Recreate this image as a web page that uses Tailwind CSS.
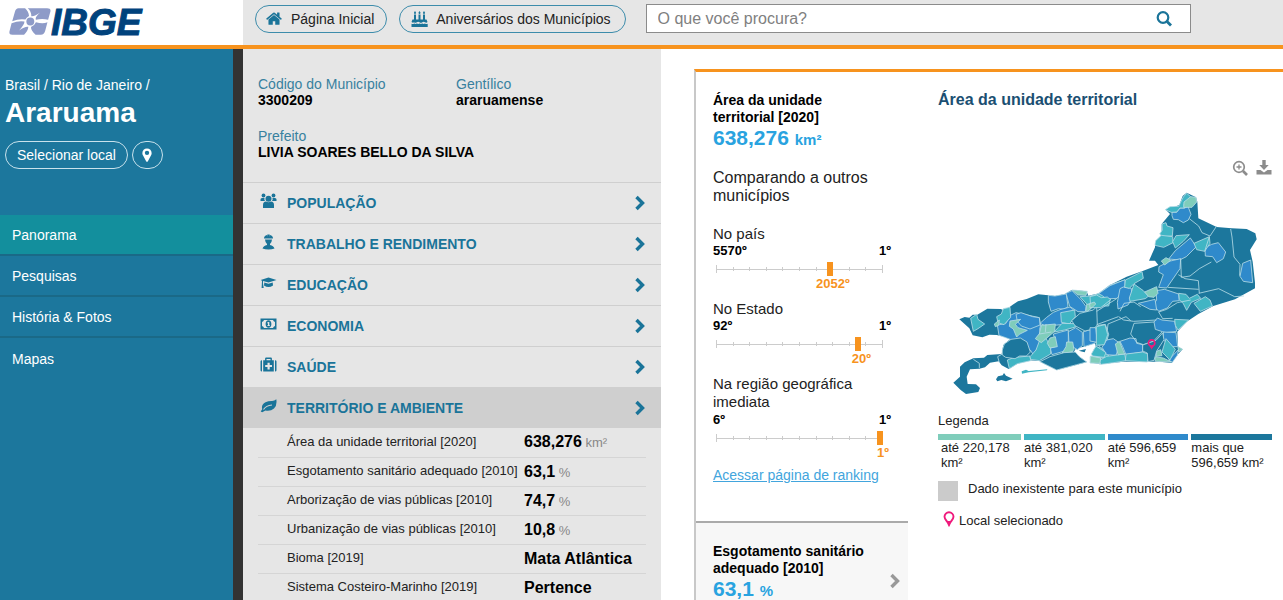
<!DOCTYPE html>
<html lang="pt-BR">
<head>
<meta charset="utf-8">
<meta name="viewport" content="width=device-width, initial-scale=1">
<title>IBGE | Araruama | Panorama</title>
<script src="https://cdn.jsdelivr.net/npm/@tailwindcss/browser@4"></script>
</head>
<body class="flex h-screen flex-col overflow-hidden bg-white font-['Liberation_Sans',Arial,sans-serif] text-sm text-[#222]">

<svg class="hidden" aria-hidden="true">
  <symbol id="chevron" viewBox="0 0 10 16"><path d="M1.5 2 7.5 8l-6 6" fill="none" stroke="currentColor" stroke-width="3.4"/></symbol>
  <symbol id="pin" viewBox="0 0 12 16"><path fill-rule="evenodd" fill="currentColor" d="M6 .5C2.900.5.700 2.800.700 5.700c0 1.300.300 2 .800 3l3.500 6.300c.400.800 1.600.800 2 0L10.500 8.700c.500-1 .800-1.700.800-3C11.300 2.800 9.100.5 6 .5zM6 3a2.500 2.500 0 1 1 0 5 2.500 2.500 0 0 1 0-5z"/></symbol>
  <symbol id="outline-pin" viewBox="0 0 12 16"><path fill="none" stroke="currentColor" stroke-width="1.900" d="M6 1.300a4.500 4.500 0 0 0-4.500 4.500c0 2 2 3.700 3.300 5.700L6 14l1.200-2.500c1.300-2 3.300-3.700 3.300-5.700A4.500 4.500 0 0 0 6 1.300z"/><path fill="currentColor" d="M3.800 10h4.400L6 15z"/></symbol>
</svg>

<header class="flex h-[49px] shrink-0 border-b-4 border-[#f7931e] bg-[#e6e6e6]">
  <a href="#" aria-label="IBGE" class="flex w-[243px] shrink-0 items-start bg-white pl-[9px]">
    <svg class="mt-2 h-[27px] w-[42px] shrink-0" viewBox="0 0 126 82" fill="#8e9bc8">
      <path d="M28 1H48Q59 11 60 24 53 27 49 35 30 32 9 40L17 12Q20 1 28 1z"/>
      <path d="M56 1H115Q127 1 125 11L118 36Q100 31 81 36 77 28 94 14 78 26 67 25 67 10 56 1z"/>
      <path d="M7 46Q28 38 46 41 47 50 30 68 48 55 58 57 57 70 45 81H9Q-2 81 1 70z"/>
      <path d="M81 43Q102 49 116 43L109 70Q106 81 96 81H80Q66 70 66 58 76 54 81 43z"/>
      <circle cx="64" cy="41" r="12"/>
    </svg>
    <svg class="h-11 w-[120px]" viewBox="0 0 120 44" role="img" aria-label="IBGE">
      <text x="0" y="35" fill="#00427c" stroke="#00427c" stroke-width="1" font-family="Liberation Sans, Arial, sans-serif" font-size="37" font-weight="bold" font-style="italic">IBGE</text>
    </svg>
  </a>
  <div class="flex min-w-0 flex-1 items-start pt-1 pl-3">
    <nav class="flex gap-3 pt-px whitespace-nowrap">
      <a href="#" class="flex h-7 items-center rounded-full border border-[#3d8cab] pr-3 pl-[10px]">
        <svg class="mr-[9px] h-4 w-4 text-[#1a7499]" viewBox="64 192 1664 1472" fill="currentColor"><path d="M1472 992v480q0 26-19 45t-45 19h-384v-384h-256v384h-384q-26 0-45-19t-19-45v-480q0-1 .5-3t.5-3l575-474 575 474q1 2 1 6zm223-69l-62 74q-8 9-21 11h-3q-13 0-21-7l-692-577-692 577q-12 8-24 7-13-2-21-11l-62-74q-8-10-7-23.500t11-21.500l719-599q32-26 76-26t76 26l244 204v-195q0-14 9-23t23-9h192q14 0 23 9t9 23v408l219 182q10 8 11 21.500t-7 23.500z"/></svg>
        Página Inicial
      </a>
      <a href="#" class="flex h-7 items-center rounded-full border border-[#3d8cab] pr-[14px] pl-[11px]">
        <svg class="mr-2 h-[17px] w-[17px] text-[#1a7499]" viewBox="0 0 17 17" fill="currentColor"><path d="M3 3.500h2V9H3zM7.500 3.500h2V9h-2zM12 3.500h2V9h-2zM4 0l1 1.500Q5 3 4 3T3 1.500zM8.500 0l1 1.500q0 1.500-1 1.500t-1-1.500zM13 0l1 1.500Q14 3 13 3t-1-1.500zM1.500 8.500h14l1 2.500q-1 1.300-2.500.3-1.300-1-2.700 0-1.500 1-2.800 0-1.300-1-2.700 0-1.500 1-2.800 0Q2 12.300.5 11zM.5 12.800q1.300.7 2.700-.2 1.300.9 2.700 0 1.300.9 2.700 0 1.300.9 2.700 0 1.300.9 2.700 0 1.300.9 2.700.2V16H.5z"/></svg>
        Aniversários dos Municípios
      </a>
    </nav>
    <form class="mr-[92px] ml-5 flex h-[29px] min-w-0 flex-1 items-center border border-[#8b8b8b] bg-white pr-4">
      <input type="search" aria-label="O que você procura?" placeholder="O que você procura?" class="h-full min-w-0 flex-1 px-[11px] text-base outline-none placeholder:text-[#808080]">
      <button type="button" aria-label="Buscar" class="text-[#1a7499]"><svg class="h-5 w-5" viewBox="0 0 20 20" fill="none" stroke="currentColor" stroke-width="2.200"><circle cx="9" cy="8.500" r="5.300"/><path d="m13 12.500 4 4" stroke-width="2.800"/></svg></button>
    </form>
  </div>
</header>

<div class="flex min-h-0 flex-1">
  <aside class="w-[243px] shrink-0 border-r-10 border-[#333] bg-[#1c779d] text-white">
    <div class="h-[166px] px-[5px] pt-7">
      <p class="leading-4">Brasil / Rio de Janeiro /</p>
      <h1 class="pt-1 text-[28px] leading-8 font-bold">Araruama</h1>
      <div class="flex gap-1 pt-3">
        <button type="button" class="h-7 rounded-full border border-[#c8e2ec] px-[11px] whitespace-nowrap">Selecionar local</button>
        <button type="button" aria-label="Ver no mapa" class="flex h-7 w-[31px] items-center justify-center rounded-full border border-[#c8e2ec]"><svg class="h-[14px] w-3"><use href="#pin"/></svg></button>
      </div>
    </div>
    <nav class="[&>a]:flex [&>a]:h-[41px] [&>a]:items-center [&>a]:pl-3">
      <a href="#" class="border-b-2 border-[#1a6987] bg-[#138f9d]">Panorama</a>
      <a href="#" class="border-b-2 border-[#1a6987]">Pesquisas</a>
      <a href="#" class="border-b-2 border-[#1a6987]">História &amp; Fotos</a>
      <a href="#">Mapas</a>
    </nav>
  </aside>

  <section class="w-[418px] shrink-0 overflow-hidden bg-[#e6e6e6]">
    <dl class="mx-[15px] grid h-[133px] grid-cols-[198px_1fr] content-start gap-y-5 pt-[27px] leading-4 [&_dd]:font-bold [&_dd]:text-black [&_dt]:text-[#38819f]">
      <div><dt>Código do Município</dt><dd>3300209</dd></div>
      <div><dt>Gentílico</dt><dd>araruamense</dd></div>
      <div class="col-span-2"><dt>Prefeito</dt><dd>LIVIA SOARES BELLO DA SILVA</dd></div>
    </dl>
    <div class="font-bold text-[#1a7499] [&>button]:flex [&>button]:h-[41px] [&>button]:w-full [&>button]:items-center [&>button]:border-t [&>button]:border-[#cfcfcf] [&>button]:pr-4 [&>button]:pl-[17px]">
      <button type="button"><svg class="mr-[10px] mb-1 h-4 w-[17px]" viewBox="0 0 17 16" fill="currentColor"><circle cx="3.500" cy="2.500" r="1.900"/><circle cx="13.500" cy="2.500" r="1.900"/><circle cx="8.500" cy="5.700" r="3"/><path d="M.5 8V6.500Q.5 5 2 5h2.500q-.5 2 .5 3zM16.500 8V6.500Q16.500 5 15 5h-2.500q.5 2-.5 3zM3 15v-3q0-3.500 3-3.500 2.500 1.500 5 0 3 0 3 3.500v3z"/></svg><span class="flex-1 text-left">POPULAÇÃO</span><svg class="h-4 w-[10px]"><use href="#chevron"/></svg></button>
      <button type="button"><svg class="mr-[10px] mb-1 h-4 w-[17px]" viewBox="0 0 17 16" fill="currentColor"><path d="M4 4.500Q4 1.500 7 .9l.3 2V.4h2.400v2.500l.3-2q3 .6 3 3.600zM5 5.500h7q-.3 3.500-2 4.500v1q3.500.5 4.500 3.500-2.500 1-6 1t-6-1Q3.500 11.500 7 11v-1q-1.700-1-2-4.500z"/></svg><span class="flex-1 text-left">TRABALHO E RENDIMENTO</span><svg class="h-4 w-[10px]"><use href="#chevron"/></svg></button>
      <button type="button"><svg class="mr-[10px] mb-1 h-4 w-[17px]" viewBox="0 0 17 16" fill="currentColor"><path d="m8.500 2.500 8 2.500-8 2.600L3 6v2.500l.7 4.500H1.600L2 5.700.7 5zM4.300 7.500l4.200 1.300 4.200-1.300.3 3q-4.500 3-9 0z"/></svg><span class="flex-1 text-left">EDUCAÇÃO</span><svg class="h-4 w-[10px]"><use href="#chevron"/></svg></button>
      <button type="button"><svg class="mr-[10px] mb-1 h-4 w-[17px]" viewBox="0 0 17 16" fill="currentColor"><path fill-rule="evenodd" d="M.5 2.500h16v11H.5zM4 4Q3.500 5.500 2 6v4q1.500.5 2 2h9q.5-1.500 2-2V6q-1.500-.5-2-2z"/><path fill-rule="evenodd" d="M8.500 4.200c1.800 0 2.900 1.600 2.900 3.800s-1.100 3.800-2.900 3.800S5.600 10.200 5.600 8s1.100-3.800 2.900-3.800zM7 6.800l.5.800.5-.3v2h-.7v.8h2.700v-.8h-.7V5.900h-1z"/></svg><span class="flex-1 text-left">ECONOMIA</span><svg class="h-4 w-[10px]"><use href="#chevron"/></svg></button>
      <button type="button"><svg class="mr-[10px] mb-1 h-4 w-[17px]" viewBox="0 0 17 16" fill="currentColor"><path fill-rule="evenodd" d="M.5 4.500q0-1.200 1.500-1.200v11.200Q.5 14.500.5 13.300zM16.500 4.500q0-1.200-1.500-1.200v11.200q1.500 0 1.500-1.200zM3.200 3.300h1.900V1.500q0-1 1-1h4.800q1 0 1 1v1.800h1.900v11.200H3.200zM6.500 2v1.300h4V2zM7.500 5.700v2.200H5.200v2.200h2.300v2.300h2.200v-2.300H12V7.900H9.700V5.700z"/></svg><span class="flex-1 text-left">SAÚDE</span><svg class="h-4 w-[10px]"><use href="#chevron"/></svg></button>
      <button type="button" class="bg-[#cfcfcf]"><svg class="mr-[10px] mb-1 h-4 w-[17px]" viewBox="0 0 17 16"><path fill="currentColor" d="M16.300 1.300q1 6-2.300 9.200-3.500 3-8.500 2L2.200 14.300.7 13.500l1.500-2.300Q1 6.500 5.500 4.300q3-1.300 6.500-1.200 2.500 0 4.300-1.800z"/><path d="M3.500 11.500Q6 7.500 12 7" fill="none" stroke="#cfcfcf" stroke-width="1.200"/></svg><span class="flex-1 text-left">TERRITÓRIO E AMBIENTE</span><svg class="h-4 w-[10px]"><use href="#chevron"/></svg></button>
    </div>
    <div class="mx-[15px]">
      <table class="w-full table-fixed border-collapse text-left text-[13px] whitespace-nowrap [&_b]:text-base [&_b]:text-black [&_span]:text-[#888] [&_th]:w-[266px] [&_th]:pl-[29px] [&_th]:font-normal [&_tr]:h-[29px] [&_tr]:border-b [&_tr]:border-[#d5d5d5]">
        <tbody>
          <tr><th scope="row">Área da unidade territorial [2020]</th><td><b>638,276</b> <span>km²</span></td></tr>
          <tr><th scope="row">Esgotamento sanitário adequado [2010]</th><td><b>63,1</b> <span>%</span></td></tr>
          <tr><th scope="row">Arborização de vias públicas [2010]</th><td><b>74,7</b> <span>%</span></td></tr>
          <tr><th scope="row">Urbanização de vias públicas [2010]</th><td><b>10,8</b> <span>%</span></td></tr>
          <tr><th scope="row">Bioma [2019]</th><td><b>Mata Atlântica</b></td></tr>
          <tr><th scope="row">Sistema Costeiro-Marinho [2019]</th><td><b>Pertence</b></td></tr>
        </tbody>
      </table>
    </div>
  </section>

  <main class="flex min-w-0 flex-1 pt-5 pl-[33px]">
    <div class="flex min-w-0 flex-1 border-t-3 border-l-2 border-t-[#f7931e] border-l-[#c8c8c8]">
      <div class="flex w-[212px] shrink-0 flex-col overflow-hidden">
        <section class="h-[449px] shrink-0 pt-5 pl-[17px]">
          <h2 class="w-40 leading-[17px] font-bold text-black">Área da unidade territorial [2020]</h2>
          <p class="text-[21px] leading-6 font-bold text-[#29a3e0]">638,276 <span class="text-[15px]">km²</span></p>
          <h3 class="pt-[17px] text-base leading-[18px]">Comparando a outros municípios</h3>

          <div class="w-[178px] pt-5">
            <h4 class="text-[15px] leading-[17px]">No país</h4>
            <div class="flex justify-between text-[13px] leading-[18px] font-bold text-black"><span>5570º</span><span>1º</span></div>
            <div class="relative mr-2 ml-[3px] h-10">
              <div class="flex h-[18px] items-center justify-between bg-[linear-gradient(#ccc,#ccc)] bg-[length:100%_1px] bg-center bg-no-repeat [&>i]:h-1 [&>i]:w-px [&>i]:bg-[#ccc]"><i class="h-2!"></i><i></i><i></i><i></i><i></i><i></i><i></i><i></i><i></i><i></i><i class="h-2!"></i></div>
              <div class="absolute top-[2px] w-[6px] -translate-x-1/2" style="left:68%"><div class="h-[14px] bg-[#f7931e]"></div></div>
              <span class="absolute top-4 -translate-x-1/2 text-[13px] leading-4 font-bold text-[#f7931e]" style="left:70%">2052º</span>
            </div>
          </div>
          <div class="w-[178px]">
            <h4 class="text-[15px] leading-[17px]">No Estado</h4>
            <div class="flex justify-between text-[13px] leading-[18px] font-bold text-black"><span>92º</span><span>1º</span></div>
            <div class="relative mr-2 ml-[3px] h-10">
              <div class="flex h-[18px] items-center justify-between bg-[linear-gradient(#ccc,#ccc)] bg-[length:100%_1px] bg-center bg-no-repeat [&>i]:h-1 [&>i]:w-px [&>i]:bg-[#ccc]"><i class="h-2!"></i><i></i><i></i><i></i><i></i><i></i><i></i><i></i><i></i><i></i><i class="h-2!"></i></div>
              <div class="absolute top-[2px] w-[6px] -translate-x-1/2" style="left:85%"><div class="h-[14px] bg-[#f7931e]"></div></div>
              <span class="absolute top-4 -translate-x-1/2 text-[13px] leading-4 font-bold text-[#f7931e]" style="left:87%">20º</span>
            </div>
          </div>
          <div class="w-[178px]">
            <h4 class="text-[15px] leading-[18px]">Na região geográfica imediata</h4>
            <div class="flex justify-between text-[13px] leading-[18px] font-bold text-black"><span>6º</span><span>1º</span></div>
            <div class="relative mr-2 ml-[3px] h-9">
              <div class="flex h-[18px] items-center justify-between bg-[linear-gradient(#ccc,#ccc)] bg-[length:100%_1px] bg-center bg-no-repeat [&>i]:h-1 [&>i]:w-px [&>i]:bg-[#ccc]"><i class="h-2!"></i><i></i><i></i><i></i><i></i><i></i><i></i><i></i><i></i><i></i><i class="h-2!"></i></div>
              <div class="absolute top-[2px] w-[6px] -translate-x-1/2" style="left:98%"><div class="h-[14px] bg-[#f7931e]"></div></div>
              <span class="absolute top-4 -translate-x-1/2 text-[13px] leading-4 font-bold text-[#f7931e]" style="left:100%">1º</span>
            </div>
          </div>
          <a href="#" class="text-sm leading-4 text-[#42a5dd] underline">Acessar página de ranking</a>
        </section>
        <section class="flex flex-1 shrink-0 items-start border-t-2 border-[#aaa] bg-[#f7f7f7] pt-5 pr-2 pl-[17px]">
          <div class="flex-1">
            <h2 class="leading-[17px] font-bold text-black">Esgotamento sanitário adequado [2010]</h2>
            <p class="text-[21px] leading-6 font-bold text-[#29a3e0]">63,1 <span class="text-[15px]">%</span></p>
          </div>
          <svg class="mt-[30px] h-4 w-[10px] shrink-0 text-[#999]"><use href="#chevron"/></svg>
        </section>
      </div>

      <section class="min-w-0 flex-1 pt-[18px] pr-[11px] pl-[30px]">
        <h2 class="text-base leading-5 font-bold text-[#1b4f72]">Área da unidade territorial</h2>
        <div class="flex justify-end gap-2 pt-[50px] text-[#8c8c8c]">
          <button type="button" aria-label="Ampliar"><svg class="h-4 w-4" viewBox="0 0 16 16" fill="none" stroke="currentColor"><circle cx="7" cy="7" r="5.300" stroke-width="1.700"/><path d="m11 11 4 4" stroke-width="2.600"/><path d="M4.500 7h5M7 4.500v5" stroke-width="1.300"/></svg></button>
          <button type="button" aria-label="Baixar"><svg class="h-4 w-4" viewBox="0 0 16 16" fill="currentColor"><path d="M6.300 0h3.400v5h3L8 10 3.300 5h3zM.5 10h4L8 12.500l3.500-2.500h4v4.500H.5z"/></svg></button>
        </div>
        <svg class="mt-3 aspect-[345/219] w-[345px]" viewBox="24 24 1035 657" role="img" aria-label="Mapa dos municípios do Rio de Janeiro" stroke="#b4dbe6" stroke-width="2.500" stroke-linejoin="round">
          <!-- state outline -->
          <path fill="#1c779d" stroke="none" d="M88 418L104 411 118 413 128 404 142 404 172 386 212 387 222 391 240 380 248 374 264 364 290 357 325 343 355 346 375 348 405 342 425 330 470 334 475 347 508 340 540 315 590 290 640 272 685 255 675 242 657 242 675 202 675 190 695 165 695 132 720 102 708 90 748 75 758 48 770 38 798 52 802 65 805 115 860 141 905 145 950 147 976 160 980 178 960 210 968 245 975 308 975 325 915 358 850 378 805 402 770 425 742 455 744 500 758 508 742 525 725 549 690 545 580 545 510 553 480 547 485 528 500 510 495 490 462 500 438 505 432 515 446 528 470 546 440 554 380 570 345 553 328 543 300 541 262 551 236 567 215 556 206 544 180 548 165 562 148 566 120 568 110 590 113 612 138 613 150 624 145 636 108 642 92 630 70 608 90 590 90 560 104 547 130 535 162 533 172 525 215 522 220 495 240 478 222 470 200 465 178 464 157 472 128 466 118 445z"/>
          <g fill="#1c779d" stroke="none"><path d="M198 598l6-9 14-3 4-7 6 8 20 9-20 8-14-4-12 4zM446 512l22-5-4 10z"/></g>
          <path fill="#40b5c4" stroke="none" d="M275 574l13-5 8 4 56-5-1 3-55 6-20 4z"/>
          <g fill="none"><path d="M130 538l18 12 0 14M217 522l-14 8 5 18M234 391l-10 2"/></g>
          <!-- western municipalities -->
          <g fill="#2f8acb">
            <path d="M202 435l25-4 14-25 17-8 20 4 50 11 4 22-3 12 2 20-2 25-10 20-8 14-10-16-26-20-34-12-34-12z"/>
            <path d="M258 403l15-5 35 12 20 3 2 22-30 12-26-9-12-14z"/>
            <path d="M355 346l20 2 34-6 5 38-12 8-17-2-22 8-8-28z"/>
            <path d="M330 430l20-18 20-15 20-8 30-8 12 10-30 10 4 32-35 3-20 4z"/>
            <path d="M408 340l18-8 28 28 14 20-2 15-22 0-25-16z"/>
            <path d="M370 462l45-12 0 40-7 22-42 12-6-20 20-5z"/>
            <path d="M415 455l22-12 20 14 0 40-15 12-25-15z"/>
            <path d="M460 455l42-12 0 34-8 13-32 10z"/>
            <path d="M506 340l34-25 45-15 2 42-44 12-10-5z"/>
          </g>
          <g fill="#40b5c4">
            <path d="M122 415l18-12 4 15 20 14-20 14-14 8z"/>
            <path d="M200 410l14-8 6-16 20-4 2 30-20 22-18-6z"/>
            <path d="M232 540l22-8 46-4 2 14-40 9-24 15z"/>
            <path d="M300 530l18-20 12-32 15-8 17 30 0 22-34 20-26-4z"/>
            <path d="M392 398l42-8 2 20-18 22-24-5z"/>
            <path d="M372 456l24-26 38 1 2 10-32 9z"/>
            <path d="M450 350l30-2 30-8 32 14-6 24-38 0-2-14-24 10z"/>
            <path d="M504 436l22-3 10 30-8 28-22 5-8-20z"/>
            <path d="M492 508l18-8 30 32-30 2-22-6z"/>
          </g>
          <g fill="#7fcdbb">
            <path d="M240 423l32-5-16 15 8 10 28 8-24 12-8 8-10-24-12-8z"/>
            <path d="M334 436l42-4-2 22-26 22-14 12-18-12 16-20z"/>
            <path d="M360 474l16-4 6 30-22 4-8-14z"/>
            <path d="M396 520l12-20 2-14 18 0 4 22-6 8z"/>
            <path d="M426 330l46 4-4 12-24-1z"/>
            <path d="M470 373l26-2-12 14-16 12z"/>
            <path d="M193 432l15-12-2 16-10 4z"/>
            <path d="M480 530l32 4 2 16-32-2z"/>
            <path d="M334 436l-6 26 36-6M348 432l-2 24"/>
          </g>
          <path fill="#1c779d" d="M425 422l25-22 40-10 10-10 2 55-12 12-25 6-30-16z"/>
          <path fill="#1c779d" d="M217 525l0-15 6-18 20-14 28-4 20 12 10 30-12 12-20 0-14 8-28-4z"/>
          <path fill="#1c779d" d="M330 545l30-15 42-12 34-2 12 14 22 16-30 8-60 16z"/>

          <!-- eastern and northern municipalities -->
          <g transform="translate(480 -90)">
            <g fill="#2f8acb">
              <path d="M246 186l14 1 10-13 14 0 10-5 9 24-8 17-15 8-15-9-15-1-4-11z"/>
              <path d="M236 327l20-25 45-38 18 26-30 30-20 10z"/>
              <path d="M207 350l30-16 35-8-2 30-40 58-24-2 14-38-14-8z"/>
              <path d="M345 293l20-10 20-5 22 28-7 20-20 12-12-18-22-2z"/>
              <path d="M458 340l24-10 6 68-28-4-10-15z"/>
              <path d="M26 431l34-24 45-18 0 26-24 30-32 2-12-10z"/>
              <path d="M90 416l10-5 24 4 2 30-12 20-30 12-2-20z"/>
              <path d="M198 422l26-4 42 14 2 20-20 2-16 20-26 10-16-20 10-14z"/>
              <path d="M145 460l50-12 5 32-20-2z"/>
              <path d="M192 516l10-12 14 6 38 4 6 30-34 4-30-10z"/>
              <path d="M220 546l38 2 5 42-15 0-28-20z"/>
              <path d="M36 592l14-22 20-4 20 14-12 36-28-2z"/>
              <path d="M90 574l30-10 18 2 2 14 18 4 0 22-50 8-10-24z"/>
              <path d="M236 630l30-32-4 18-15 21z"/>
              <path d="M0 533l17 0 5 44-22-4z"/>
            </g>
            <g fill="#40b5c4">
              <path d="M226 179l14-9 26-1 14-28 10-11 12 10-20 22 2 12-14 0-10 12-16 1z"/>
              <path d="M216 222l12-4 3 10 18 5-2 25-30 2-8-8 8-12z"/>
              <path d="M197 272l17-16 34 4 1 18-28 14-26-6z"/>
              <path d="M248 275l10-18 40-3-18 20-24 20z"/>
              <path d="M312 280l46-20 2 20-16 24-24-5z"/>
              <path d="M106 390l50-25 4 20-28 16-14 14-14-3z"/>
              <path d="M118 444l14-42 28 20 16 16-10 8-46 8z"/>
              <path d="M266 430l22 3 10 12 24-12 10 12-28 12-14 24-10-20-12-12z"/>
              <path d="M312 460l34-20 14 10 7 18-36 16z"/>
              <path d="M254 508l42 2-32 30-8-14z"/>
              <path d="M19 530l26-6 8 30-10 30-24 2z"/>
              <path d="M216 606l12-40 28 32-16 32z"/>
              <path d="M24 634l26-15 54-7 4 20-30 5-44 6z"/>
              <path d="M108 612l50-6 16 6-2 24-66-4z"/>
              <path d="M4 612l14-24 30 20-6 14-34-4z"/>
              <path d="M0 440l20-5 14 8 18-2 10 8-30 24-30 0z"/>
            </g>
            <g fill="#7fcdbb">
              <path d="M282 156l20-16 16 2 2 14-14 16-25 0z"/>
              <path d="M214 333l14-10 14 8-18 14z"/>
              <path d="M164 426l36-16 4 20-12 12-16-2z"/>
              <path d="M-1 461l14-5 4 6-10 10-7 2z"/>
              <path d="M76 582l12-8 16 38-20 2z"/>
              <path d="M200 604l12-5 4 18-18 2z"/>
              <path d="M194 620l26 4 24 12-48-2z"/>
              <path d="M264 590l14 8-12 8z"/>
              <path d="M2 618l30 6-2 16-30-1z"/>
            </g>
            <g fill="none">
              <path d="M298 206l28 22 10 20 24 10 20-30M358 260l-14 44M422 237l4 24 6 60 18 22-1 34M272 326l2 56 26-4 28-22 36-20M326 430l60-14 48 24 28-2M328 430l-3-38-40-6-20-12M234 412l92 6M20 484l60-38M85 500l-65 24M86 500l15 10 30 4 68-4M90 484l12-24 30-4 20 14M122 552l10-32 60-4M52 540l2-18 54-22 14 12M122 552l18 25 20 7 30-10 26-28M206 486l24-8 32-20 40-8M206 486l12 20 30-1"/>
            </g>
            <path fill="#1c779d" d="M158 585l40-14 20-22 4 20-22 34-8 28-18 4-2-26-14-6z"/>
            <path stroke="none" fill="#ef1a7c" fill-rule="evenodd" d="M185 567c-8 0-12 6-12 12 0 8 8 10 12 20 4-10 12-12 12-20 0-6-4-12-12-12zm0 5a7 7 0 1 1 0 14 7 7 0 0 1 0-14z"/>
          </g>
        </svg>
        <div class="pt-1.5 text-[13px] leading-[15px]">
          <h3 class="leading-4">Legenda</h3>
          <ul class="grid grid-cols-[83px_repeat(3,1fr)] gap-[3px] pt-[5px]">
            <li class="border-t-6 border-[#7fcdbb] pl-[3px]">até 220,178 km²</li>
            <li class="border-t-6 border-[#40b5c4]">até 381,020 km²</li>
            <li class="border-t-6 border-[#2f8acb]">até 596,659 km²</li>
            <li class="border-t-6 border-[#1c779d]">mais que 596,659 km²</li>
          </ul>
          <p class="flex gap-[10px] pt-[11px]"><span class="h-5 w-5 bg-[#cbcbcb]"></span>Dado inexistente para este município</p>
          <p class="flex items-center gap-1 pt-2 pl-[5px]"><svg class="h-4 w-3 text-[#ef1a7c]"><use href="#outline-pin"/></svg><span class="pt-1">Local selecionado</span></p>
        </div>
      </section>
    </div>
  </main>
</div>
</body>
</html>
